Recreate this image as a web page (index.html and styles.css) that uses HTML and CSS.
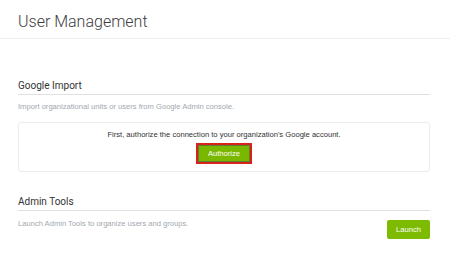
FILE: index.html
```html
<!DOCTYPE html>
<html lang="en">
<head>
    <meta charset="UTF-8">
    <title>User Management</title>
    <link rel="stylesheet" href="styles.css">
</head>
<body>
<div class="header">
    <h1>User Management</h1>
</div>
<div class="content">
    <div class="section">
        <h2>Google Import</h2>
        <p class="desc">Import organizational units or users from Google Admin console.</p>
        <div class="panel">
            <p>First, authorize the connection to your organization's Google account.</p>
            <span class="highlight"><a class="btn" href="#">Authorize</a></span>
        </div>
    </div>
    <div class="section second">
        <h2>Admin Tools</h2>
        <div class="row">
            <p class="desc">Launch Admin Tools to organize users and groups.</p>
            <a class="btn launch" href="#">Launch</a>
        </div>
    </div>
</div>
</body>
</html>
```

FILE: styles.css
```css
* {
    margin: 0;
    padding: 0;
    box-sizing: border-box;
}

body {
    background: #fff;
    font-family: "Liberation Sans", Arial, sans-serif;
    font-size: 7.6px;
    color: #333;
}

.header {
    height: 39px;
    padding: 10px 18px 0;
    border-bottom: 1px solid #eee;
}

.header h1 {
    font-family: Roboto, sans-serif;
    font-weight: 300;
    font-size: 16px;
    line-height: 24px;
    color: #3c3c3c;
}

.content {
    padding: 0 20px 0 18px;
}

.section {
    margin-top: 40px;
}

.section.second {
    margin-top: 23px;
}

.section h2 {
    font-family: Roboto, sans-serif;
    font-weight: 400;
    font-size: 10px;
    line-height: 14px;
    color: #333;
    padding-bottom: 1px;
    border-bottom: 1px solid #e0e0e0;
}

.desc {
    margin: 6px 0 9px;
    line-height: 12px;
    color: #a2a9b0;
}

.panel {
    border: 1px solid #ececec;
    border-radius: 3px;
    padding: 6px 0 7px;
    text-align: center;
}

.panel p {
    line-height: 12px;
    margin-bottom: 2px;
}

.highlight {
    display: inline-block;
    border: 2px solid #d8231c;
}

.btn {
    display: inline-block;
    background: #7ab800;
    color: #fff;
    text-decoration: none;
    line-height: 15px;
    padding: 0 9px;
    border: 1px solid #5f7d2a;
}

.row {
    display: flex;
    justify-content: space-between;
    align-items: flex-start;
}

.row .desc {
    margin: 7px 0 0;
}

.btn.launch {
    margin-top: 9px;
    line-height: 19px;
    border: none;
    border-radius: 2px;
    padding: 0 9px;
    background: #7dbb00;
}
```
